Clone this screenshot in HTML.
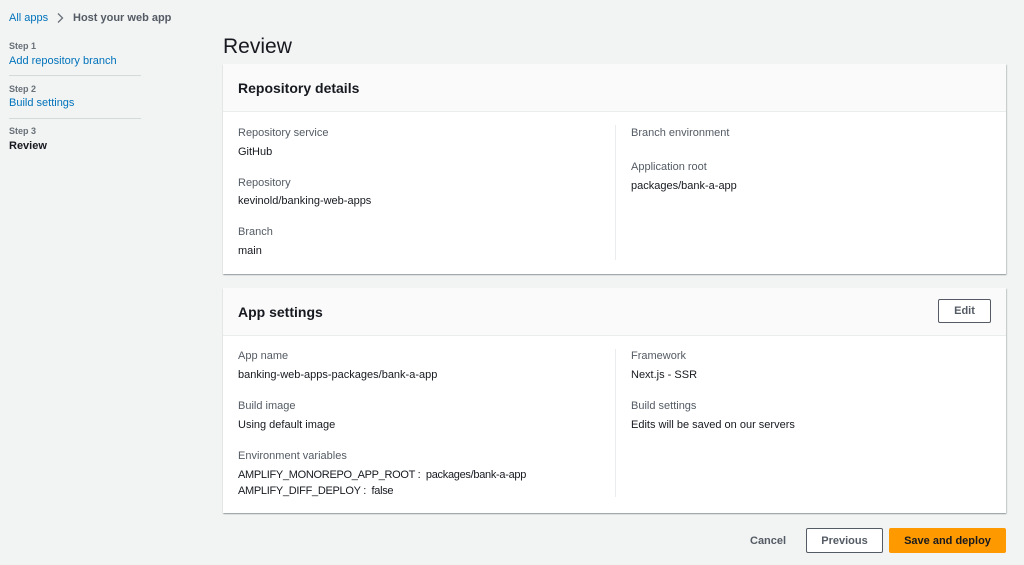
<!DOCTYPE html>
<html><head><style>
*{margin:0;padding:0;box-sizing:border-box}
body{width:1024px;height:565px;background:#f2f3f3;font-family:"Liberation Sans",sans-serif;color:#16191f;position:relative;overflow:hidden;font-size:11px}
.a{position:absolute;white-space:nowrap}
.link{color:#0073bb}
.step{color:#687078;font-size:9px;font-weight:bold}
.hr{position:absolute;left:9px;width:132px;height:1px;background:#d5dbdb}
.card{position:absolute;left:223px;width:783px;background:#fff;box-shadow:0 1px 1px rgba(0,28,36,.3),1px 1px 1px rgba(0,28,36,.15)}
.hd{position:absolute;left:0;top:0;right:0;height:48px;background:#fafafa;border-bottom:1px solid #eaeded}
.ht{position:absolute;left:15px;top:16px;font-size:14px;font-weight:bold}
.lb{color:#545b64;font-size:11px}
.v{font-size:11px}
.div{position:absolute;left:392px;width:1px;background:#eaeded}
.btn{position:absolute;border:1px solid #545b64;border-radius:2px;background:#fff;font-weight:bold;font-size:11px;color:#545b64;display:flex;align-items:center;justify-content:center}
</style></head><body>
<div class="a link" style="left:9px;top:12px;font-size:11px">All apps</div>
<svg class="a" style="left:55px;top:12px" width="10" height="12" viewBox="0 0 10 12"><path d="M3 1.5 L7.5 6 L3 10.5" fill="none" stroke="#687078" stroke-width="1.3"/></svg>
<div class="a" style="left:73px;top:12px;font-size:11px;color:#545b64;font-weight:bold">Host your web app</div>
<div class="a step" style="left:9px;top:41px">Step 1</div>
<div class="a link" style="left:9px;top:55px">Add repository branch</div>
<div class="hr" style="top:75px"></div>
<div class="a step" style="left:9px;top:84px">Step 2</div>
<div class="a link" style="left:9px;top:97px">Build settings</div>
<div class="hr" style="top:118px"></div>
<div class="a step" style="left:9px;top:126px">Step 3</div>
<div class="a" style="left:9px;top:140px;font-weight:bold">Review</div>
<div class="a" style="left:223px;top:35px;font-size:21px">Review</div>

<div class="card" style="top:64px;height:210px">
<div class="hd"><div class="ht">Repository details</div></div>
<div class="div" style="top:61px;height:135px"></div>
<div class="a lb" style="left:15px;top:63px">Repository service</div>
<div class="a v" style="left:15px;top:82px">GitHub</div>
<div class="a lb" style="left:15px;top:113px">Repository</div>
<div class="a v" style="left:15px;top:131px">kevinold/banking-web-apps</div>
<div class="a lb" style="left:15px;top:162px">Branch</div>
<div class="a v" style="left:15px;top:181px">main</div>
<div class="a lb" style="left:408px;top:63px">Branch environment</div>
<div class="a lb" style="left:408px;top:97px">Application root</div>
<div class="a v" style="left:408px;top:116px">packages/bank-a-app</div>
</div>

<div class="card" style="top:288px;height:225px">
<div class="hd"><div class="ht">App settings</div></div>
<div class="btn" style="left:715px;top:11px;width:53px;height:24px">Edit</div>
<div class="div" style="top:61px;height:148px"></div>
<div class="a lb" style="left:15px;top:62px">App name</div>
<div class="a v" style="left:15px;top:81px">banking-web-apps-packages/bank-a-app</div>
<div class="a lb" style="left:15px;top:112px">Build image</div>
<div class="a v" style="left:15px;top:131px">Using default image</div>
<div class="a lb" style="left:15px;top:162px">Environment variables</div>
<div class="a v" style="left:15px;top:181px;letter-spacing:-0.3px">AMPLIFY_MONOREPO_APP_ROOT :&nbsp; packages/bank-a-app</div>
<div class="a v" style="left:15px;top:197px;letter-spacing:-0.3px">AMPLIFY_DIFF_DEPLOY :&nbsp; false</div>
<div class="a lb" style="left:408px;top:62px">Framework</div>
<div class="a v" style="left:408px;top:81px">Next.js - SSR</div>
<div class="a lb" style="left:408px;top:112px">Build settings</div>
<div class="a v" style="left:408px;top:131px">Edits will be saved on our servers</div>
</div>

<div class="a" style="left:750px;top:535px;font-weight:bold;color:#545b64">Cancel</div>
<div class="btn" style="left:806px;top:528px;width:77px;height:25px">Previous</div>
<div class="btn" style="left:889px;top:528px;width:117px;height:25px;background:#ff9900;border-color:#ff9900;color:#16191f">Save and deploy</div>
</body></html>
